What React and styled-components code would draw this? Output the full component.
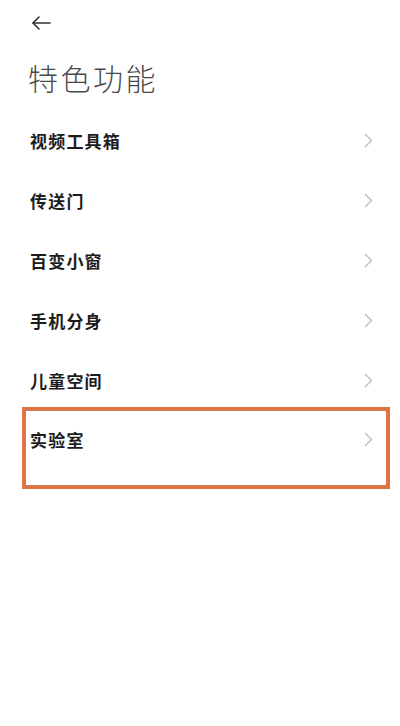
import React from "react";
import styled, { createGlobalStyle } from "styled-components";

const Global = createGlobalStyle`
  html, body { margin: 0; padding: 0; background: #fff; }
  body { font-family: "Noto Sans CJK SC", "Noto Sans", sans-serif; }
`;

const Page = styled.div`
  width: 400px;
  min-height: 726px;
  background: #fff;
`;

const Header = styled.div`
  height: 46px;
  display: flex;
  align-items: center;
  padding-left: 31px;
`;

const Title = styled.h1`
  margin: 11px 0 0 28px;
  font-size: 30px;
  line-height: 40px;
  font-weight: 300;
  color: #4a4a4a;
  letter-spacing: 2.5px;
`;

const List = styled.div`
  margin-top: 13px;
  display: flex;
  flex-direction: column;
`;

const Row = styled.div`
  height: ${(p) => (p.$h ? p.$h : 60)}px;
  display: flex;
  align-items: center;
  justify-content: space-between;
  padding: 0 ${(p) => (p.$pr != null ? p.$pr : 27)}px 0 ${(p) => (p.$pl != null ? p.$pl : 30)}px;
`;

const Label = styled.span`
  font-size: 17px;
  font-weight: 700;
  color: #1c1c1c;
  letter-spacing: 1.2px;
`;

const Highlight = styled.div`
  margin: -3px 10px 0 22px;
  border: 4px solid #dc7446;
  padding-bottom: 18px;
`;

const Chevron = () => (
  <svg width="9" height="15" viewBox="0 0 9 15" fill="none">
    <polyline points="1.5,1.5 7.5,7.5 1.5,13.5" stroke="#bdbdbd" strokeWidth="1.4" strokeLinecap="round" strokeLinejoin="round" />
  </svg>
);

const BackArrow = () => (
  <svg width="20" height="14" viewBox="0 0 20 14" fill="none">
    <line x1="2" y1="7" x2="19" y2="7" stroke="#333" strokeWidth="1.6" strokeLinecap="round" />
    <polyline points="8,1 2,7 8,13" stroke="#333" strokeWidth="1.6" strokeLinecap="round" strokeLinejoin="round" />
  </svg>
);

const items = ["视频工具箱", "传送门", "百变小窗", "手机分身", "儿童空间"];

export default function App() {
  return (
    <Page>
      <Global />
      <Header>
        <BackArrow />
      </Header>
      <Title>特色功能</Title>
      <List>
        {items.map((t) => (
          <Row key={t}>
            <Label>{t}</Label>
            <Chevron />
          </Row>
        ))}
        <Highlight>
          <Row $h={56} $pl={4} $pr={13}>
            <Label>实验室</Label>
            <Chevron />
          </Row>
        </Highlight>
      </List>
    </Page>
  );
}
